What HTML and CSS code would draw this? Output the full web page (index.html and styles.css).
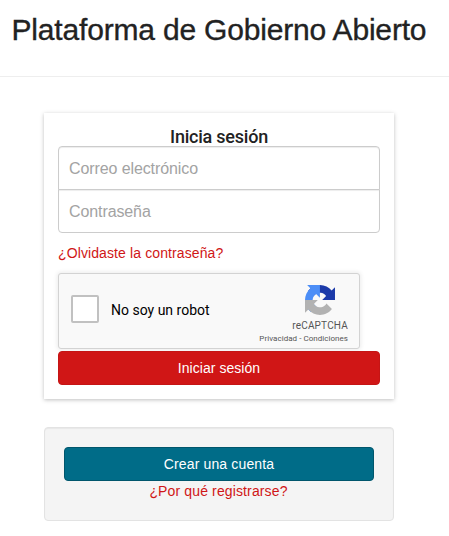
FILE: index.html
```html
<!DOCTYPE html>
<html lang="es">
<head>
<meta charset="utf-8">
<title>Plataforma de Gobierno Abierto</title>
<link rel="stylesheet" href="styles.css">
</head>
<body>
<header class="page-header"><h1>Plataforma de Gobierno Abierto</h1></header>
<main>
  <form class="card">
    <h2>Inicia sesión</h2>
    <input class="field field-top" type="email" placeholder="Correo electrónico">
    <input class="field field-bottom" type="password" placeholder="Contraseña">
    <a class="forgot" href="#">¿Olvidaste la contraseña?</a>
    <div class="captcha">
      <span class="checkbox"></span>
      <span class="captcha-label">No soy un robot</span>
      <div class="captcha-brand">
        <svg class="logo" viewBox="0 0 64 64" width="30" height="30">
          <path fill="#1c3aa9" d="M64 31.955l-.033-1.37V4.687l-7.16 7.16C50.948 4.674 42.033.093 32.05.093c-10.4 0-19.622 4.96-25.458 12.64l11.736 11.86a15.55 15.55 0 0 1 4.754-5.334c2.05-1.6 4.952-2.906 8.968-2.906.485 0 .86.057 1.135.163 4.976.393 9.288 3.14 11.828 7.124l-8.307 8.307L64 31.953"/>
          <path fill="#4c8ef7" d="M31.862.094l-1.37.033H4.594l7.16 7.16C4.58 13.147 0 22.06 0 32.046c0 10.4 4.96 19.622 12.64 25.458L24.5 45.768a15.55 15.55 0 0 1-5.334-4.754c-1.6-2.05-2.906-4.952-2.906-8.968 0-.485.057-.86.163-1.135.393-4.976 3.14-9.288 7.124-11.828l8.307 8.307L31.86.095"/>
          <path fill="#b2b2b2" d="M.001 32.045l.033 1.37v25.898l7.16-7.16c5.86 7.173 14.774 11.754 24.76 11.754 10.4 0 19.622-4.96 25.458-12.64l-11.736-11.86a15.55 15.55 0 0 1-4.754 5.334c-2.05 1.6-4.952 2.906-8.968 2.906-.485 0-.86-.057-1.135-.163-4.976-.393-9.288-3.14-11.828-7.124l8.307-8.307c-10.522.04-22.4.066-27.295-.005"/>
        </svg>
        <span class="brand-name">reCAPTCHA</span>
        <span class="brand-links">Privacidad - Condiciones</span>
      </div>
    </div>
    <button class="btn btn-red" type="button">Iniciar sesión</button>
  </form>
  <section class="well">
    <button class="btn btn-blue" type="button">Crear una cuenta</button>
    <a class="why" href="#">¿Por qué registrarse?</a>
  </section>
</main>
</body>
</html>
```

FILE: styles.css
```css
* { box-sizing: border-box; }
body {
  margin: 0;
  background: #fff;
  color: #222;
  font: 300 14px/20px "Liberation Sans", Arial, sans-serif;
}
.page-header {
  height: 77px;
  padding: 13px 0 0 11.5px;
  border-bottom: 1px solid #eee;
}
h1 {
  margin: 0;
  font: 400 30px/33px "Liberation Sans", Arial, sans-serif;
  letter-spacing: -.18px;
  -webkit-text-stroke: .35px #222;
  white-space: nowrap;
}
main { width: 350px; margin: 36px 0 0 44px; }
.card {
  height: 286px;
  padding: 14px 14px 0;
  background: #fff;
  box-shadow: 0 1px 4px rgba(0, 0, 0, .25);
}
h2 {
  margin: 0;
  height: 19px;
  text-align: center;
  font: 500 18px/20px Roboto, sans-serif;
  letter-spacing: -.22px;
}
.field {
  display: block;
  width: 100%;
  height: 44px;
  padding: 11px 10px 9px;
  border: 1px solid #ccc;
  background: #fff;
  box-shadow: inset 0 1px 1px rgba(0, 0, 0, .075);
  font: 300 16px/22px "Liberation Sans", Arial, sans-serif;
  letter-spacing: -.1px;
}
.field::placeholder { color: #a3a3a3; opacity: 1; }
.field-top { border-radius: 4px 4px 0 0; }
.field-bottom { margin-top: -1px; border-radius: 0 0 4px 4px; }
a { display: block; color: #d01616; text-decoration: none; }
.forgot { margin-top: 10px; letter-spacing: .11px; }
.captcha {
  display: flex;
  align-items: center;
  width: 302px;
  height: 76px;
  margin: 10px 0 2px;
  padding: 0 11px 0 12px;
  border: 1px solid #d3d3d3;
  border-radius: 3px;
  background: #f9f9f9;
  box-shadow: 0 0 4px 1px rgba(0, 0, 0, .08);
  color: #000;
}
.checkbox {
  width: 28px;
  height: 28px;
  margin-top: -4px;
  border: 2px solid #c1c1c1;
  border-radius: 2px;
  background: #fff;
}
.captcha-label { margin: -2px 0 0 12px; font: 400 14px/17px Roboto, sans-serif; }
.captcha-brand {
  display: flex;
  flex-direction: column;
  align-items: flex-end;
  align-self: flex-start;
  margin: 11px 0 0 auto;
  color: #555;
}
.logo { margin: 0 13px 5px 0; }
.brand-name { font: 400 10px/12px Roboto, sans-serif; letter-spacing: .2px; }
.brand-links { margin-top: 1px; font: 400 8px/12px Roboto, sans-serif; letter-spacing: .04px; }
.btn {
  display: block;
  width: 100%;
  height: 34px;
  padding: 0;
  border: 1px solid;
  border-radius: 4px;
  color: #fff;
  font: 300 14px/20px "Liberation Sans", Arial, sans-serif;
}
.btn-red { background: #d01616; border-color: #c51515; letter-spacing: .05px; }
.btn-blue { background: #006c88; border-color: #00566c; letter-spacing: .15px; }
.well {
  height: 94px;
  margin-top: 28px;
  padding: 19px;
  border: 1px solid #e3e3e3;
  border-radius: 4px;
  background: #f4f4f4;
  box-shadow: inset 0 1px 1px rgba(0, 0, 0, .05);
}
.why { padding-right: 1px; text-align: center; letter-spacing: .13px; }
```
